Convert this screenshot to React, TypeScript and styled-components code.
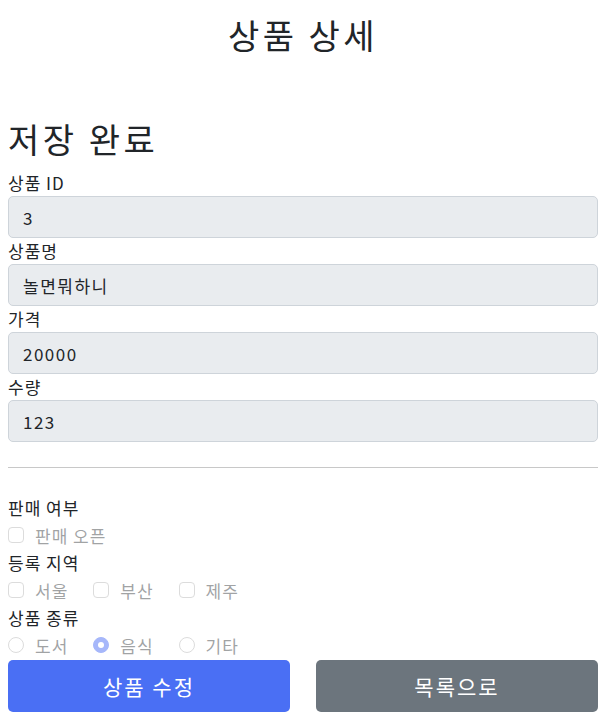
import React from "react";
import styled, { createGlobalStyle } from "styled-components";

const GlobalStyle = createGlobalStyle`
  html, body {
    margin: 0;
    padding: 0;
    background: #ffffff;
  }
  body {
    font-family: "Noto Sans CJK KR", "Noto Sans", sans-serif;
    color: #212529;
  }
  * { box-sizing: border-box; }
`;

const Page = styled.div`
  padding: 0 18px 0 8px;
`;

const Header = styled.header`
  padding: 13px 0 60px;
  text-align: center;
`;

const Title = styled.h2`
  margin: 0;
  font-size: 34px;
  font-weight: 400;
  line-height: 44px;
  letter-spacing: 3.5px;
`;

const StatusTitle = styled(Title)`
  text-align: left;
  margin-bottom: 9px;
`;

const Field = styled.div`
  display: flex;
  flex-direction: column;
`;

const Label = styled.label`
  display: block;
  font-size: 17px;
  line-height: 26px;
  height: 26px;
  letter-spacing: 1px;
`;

const TextInput = styled.input`
  display: block;
  width: 100%;
  height: 42px;
  padding: 0 14px;
  font-family: inherit;
  font-size: 17px;
  letter-spacing: 1.5px;
  color: #212529;
  background: #e9ecef;
  border: 1px solid #ced4da;
  border-radius: 5px;
  outline: none;
`;

const Divider = styled.hr`
  margin: 25px 0 26px;
  border: 0;
  border-top: 1px solid #c8c8c8;
  height: 0;
`;

const GroupLabel = styled.div`
  font-size: 17px;
  line-height: 27px;
  height: 27px;
  letter-spacing: 1px;
`;

const CheckRow = styled.div`
  display: flex;
  align-items: center;
  gap: 25px;
  height: 28px;
`;

const CheckItem = styled.label`
  display: flex;
  align-items: center;
  gap: 11px;
  font-size: 17px;
  letter-spacing: 1px;
  color: #212529;
`;

const ItemText = styled.span`
  opacity: 0.42;
`;

const Box = styled.input`
  appearance: none;
  margin: 0;
  width: 16px;
  height: 16px;
  border: 1px solid #dcdcdc;
  background: #fff;
  border-radius: ${(p) => (p.type === "radio" ? "50%" : "4px")};
  flex: none;
  position: relative;
  &:checked {
    background: #a6b7fa;
    border-color: #a6b7fa;
  }
  &[type="radio"]:checked::after {
    content: "";
    position: absolute;
    left: 4px;
    top: 4px;
    width: 6px;
    height: 6px;
    border-radius: 50%;
    background: #fff;
  }
`;

const ButtonRow = styled.div`
  display: flex;
  gap: 26px;
  margin-top: 1px;
`;

const Button = styled.button<{ $variant: "primary" | "secondary" }>`
  flex: 1;
  height: 52px;
  border: 0;
  border-radius: 5px;
  font-family: inherit;
  font-size: 21px;
  letter-spacing: 2px;
  color: #fff;
  background: ${(p) => (p.$variant === "primary" ? "#4a6ff4" : "#6c757d")};
`;

const fields = [
  { id: "itemId", label: "상품 ID", value: "3" },
  { id: "itemName", label: "상품명", value: "놀면뭐하니" },
  { id: "price", label: "가격", value: "20000" },
  { id: "quantity", label: "수량", value: "123" },
];

export default function App() {
  return (
    <Page>
      <GlobalStyle />
      <Header>
        <Title>상품 상세</Title>
      </Header>
      <StatusTitle>저장 완료</StatusTitle>
      {fields.map((f) => (
        <Field key={f.id}>
          <Label htmlFor={f.id}>{f.label}</Label>
          <TextInput id={f.id} value={f.value} readOnly />
        </Field>
      ))}
      <Divider />
      <GroupLabel>판매 여부</GroupLabel>
      <CheckRow>
        <CheckItem>
          <Box type="checkbox" disabled />
          <ItemText>판매 오픈</ItemText>
        </CheckItem>
      </CheckRow>
      <GroupLabel>등록 지역</GroupLabel>
      <CheckRow>
        {["서울", "부산", "제주"].map((r) => (
          <CheckItem key={r}>
            <Box type="checkbox" disabled />
            <ItemText>{r}</ItemText>
          </CheckItem>
        ))}
      </CheckRow>
      <GroupLabel>상품 종류</GroupLabel>
      <CheckRow>
        {["도서", "음식", "기타"].map((t) => (
          <CheckItem key={t}>
            <Box type="radio" name="itemType" disabled defaultChecked={t === "음식"} />
            <ItemText>{t}</ItemText>
          </CheckItem>
        ))}
      </CheckRow>
      <ButtonRow>
        <Button $variant="primary">상품 수정</Button>
        <Button $variant="secondary">목록으로</Button>
      </ButtonRow>
    </Page>
  );
}
